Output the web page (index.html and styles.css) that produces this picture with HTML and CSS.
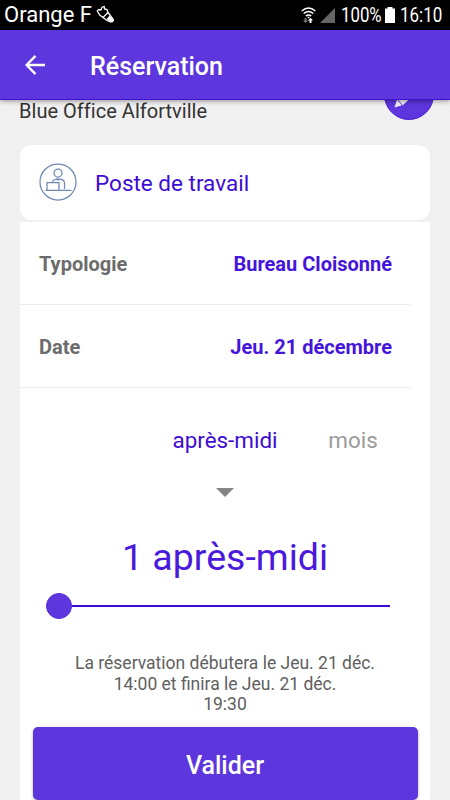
FILE: index.html
```html
<!DOCTYPE html>
<html lang="fr">
<head>
<meta charset="utf-8">
<title>Réservation</title>
<link rel="stylesheet" href="styles.css">
</head>
<body>
<div class="screen">
  <header class="status">
    <span class="carrier">Orange F</span>
    <svg class="sim" width="19" height="19" viewBox="0 0 19 19" fill="none" stroke="#fff" stroke-width="1.300"><path d="M1.200 6 3 4.500 5 5 6 2.200l2.200-.7L8.500 4l2.500.5 1 3-5 5-3.300-2.500z"/><path d="M12 7.500 17 14q1 3-2.500 2.800L11 15.500 7 12.500"/><path d="m11.500 14 3.500 2.800 2-1.500-3.500-3.500z" fill="#fff"/></svg>
    <div class="indicators">
      <svg class="wifi" width="15" height="17" viewBox="0 0 15 17" fill="none" stroke="#fff" stroke-width="1.500"><path d="M.7 4Q7.500-2 14.300 4M2.700 6.500q4.800-4 9.600 0M4.800 9q2.700-2.200 5.400 0"/><path d="M7.500 11.500 6 9.800h3z" fill="#fff" stroke="none"/><path d="M3.500 11h2v2.500H7L4.500 16 2 13.500h1.500z" fill="#777" stroke="none"/><path d="M8.500 16h2v-2.500H12L9.500 10.800 7 13.500h1.500z" fill="#fff" stroke="none"/></svg>
      <svg class="signal" width="15" height="15" viewBox="0 0 15 15"><path d="M15 0v15H0z" fill="#666"/></svg>
      <span class="percent">100%</span>
      <svg class="battery" width="10" height="16" viewBox="0 0 10 16"><path d="M2.500 0h5v1.500H10V16H0V1.500h2.500z" fill="#fff"/></svg>
      <span class="clock">16:10</span>
    </div>
  </header>
  <nav class="appbar">
    <svg class="back" width="21" height="20" viewBox="0 0 21 20" fill="none" stroke="#fff" stroke-width="2.300"><path d="M20 10H2M10.500 .9 1.500 10l9 9.100"/></svg>
    <h1 class="title">Réservation</h1>
  </nav>
  <main class="content">
    <p class="place">Blue Office Alfortville</p>
    <div class="edit"><svg width="50" height="50" viewBox="0 0 50 50"><path d="m10.500 37.500 2.500-8L27 16l6 6-14 13z" fill="#f1f1f1"/><path d="m13.500 29.500 5 6" stroke="#5d36dd" stroke-width="1"/></svg></div>
    <section class="card">
      <svg class="desk" width="38" height="38" viewBox="0 0 38 38" fill="none" stroke="#6f88b4" stroke-width="1.250"><circle cx="19" cy="19" r="18"/><circle cx="19" cy="10" r="4"/><path d="M6.500 27.400h26M8 27v-7.500h12V27M13.500 19.500v-1q1-1.800 4-2.300h4q4 .5 4 4.300V26M17 16q2 1.600 4 0"/></svg>
      <h2 class="kind">Poste de travail</h2>
    </section>
    <section class="panel">
      <div class="row"><span class="label">Typologie</span><span class="value">Bureau Cloisonné</span></div>
      <div class="row"><span class="label">Date</span><span class="value">Jeu. 21 décembre</span></div>
      <div class="units"><span></span><span class="unit active">après-midi</span><span class="unit">mois</span></div>
      <svg class="caret" width="18" height="9" viewBox="0 0 18 9"><path d="M0 0h18L9 9z" fill="#858585"/></svg>
      <div class="duration">1 après-midi</div>
      <div class="slider"><div class="thumb"></div><div class="track"></div></div>
      <p class="summary">La réservation débutera le Jeu. 21 déc.<br>14:00 et finira le Jeu. 21 déc.<br>19:30</p>
      <button class="submit">Valider</button>
    </section>
  </main>
</div>
</body>
</html>
```
FILE: styles.css
```css
* { box-sizing: border-box; }
body { margin: 0; font-family: Roboto, sans-serif; }
h1, h2, p { margin: 0; }
svg { display: block; flex: none; }
.screen { width: 450px; height: 800px; overflow: hidden; background: #f0f0f0; display: flex; flex-direction: column; }
.status { height: 30px; flex: none; background: #000; color: #fff; display: flex; align-items: center; padding: 0 8px 0 4px; white-space: nowrap; }
.carrier { font-size: 22px; line-height: 30px; margin-top: -1px; }
.sim { margin: 0 0 1px 4px; }
.indicators { margin-left: auto; display: flex; align-items: center; font-size: 20px; line-height: 30px; }
.wifi { margin-right: 4px; }
.signal { margin-right: 6px; }
.percent { width: 40px; margin-right: 4px; transform: scaleX(.84); transform-origin: left; }
.battery { margin-right: 5px; }
.clock { width: 42px; transform: scaleX(.85); transform-origin: left; }
.appbar { height: 70px; flex: none; background: #5d36dd; border-bottom: 1px solid #4310cf; box-shadow: 0 1px 5px rgba(0,0,0,.4); display: flex; align-items: center; padding: 1px 0 0 25px; position: relative; z-index: 2; }
.title { color: #fff; font-size: 25px; font-weight: 500; margin-left: 44px; line-height: 30px; padding-top: 4px; }
.content { position: relative; flex: 1; padding: 0 20px; }
.place { height: 45px; line-height: 22px; font-size: 20px; color: #333; margin-left: -1px; letter-spacing: .03px; }
.edit { position: absolute; left: 384px; top: -30px; width: 50px; height: 50px; border-radius: 50%; background: #5d36dd; border: 1px solid #4f20d6; }
.edit svg { margin: -1px; }
.card { height: 75px; border-radius: 12px; background: #fff; display: flex; align-items: center; padding-left: 18.500px; }
.desk { margin-top: -1px; }
.kind { font-size: 22.500px; font-weight: 400; color: #3e0bd5; margin-left: 18.500px; line-height: 30px; }
.panel { margin-top: 2px; height: 578px; background: #fff; display: flex; flex-direction: column; align-items: center; }
.row { width: 390px; height: 83px; flex: none; border-bottom: 1px solid #ececec; display: flex; justify-content: space-between; align-items: center; padding: 1px 18px 0 0; font-size: 20px; font-weight: 700; align-self: flex-start; }
.label { color: #6c6c6c; margin-left: 19px; }
.value { color: #4515dc; }
.units { width: 384px; height: 30px; margin-top: 37px; display: grid; grid-template-columns: 1fr 1fr 1fr; align-items: center; flex: none; }
.unit { text-align: center; font-size: 22.400px; line-height: 30px; color: #9b9b9b; white-space: nowrap; }
.unit.active { color: #3e0bd5; }
.caret { margin-top: 33px; }
.duration { margin-top: 36px; font-size: 37.500px; line-height: 48px; color: #4919dc; }
.slider { margin-top: 12px; width: 344px; height: 26px; flex: none; display: flex; align-items: center; align-self: flex-start; margin-left: 26px; }
.thumb { width: 26px; height: 26px; border-radius: 50%; background: #5d36dd; border: 1px solid #5428da; }
.track { flex: 1; height: 2px; background: #3f08d4; }
.summary { margin-top: 34px; font-size: 17.500px; line-height: 20.500px; color: #606060; text-align: center; white-space: nowrap; }
.submit { margin-top: 12px; width: 385px; height: 73px; flex: none; border: 0; border-radius: 5px; background: #5d36dd; color: #fff; font: 500 25px/30px Roboto, sans-serif; box-shadow: 0 1px 3px rgba(0,0,0,.3); padding-top: 6px; }
```
